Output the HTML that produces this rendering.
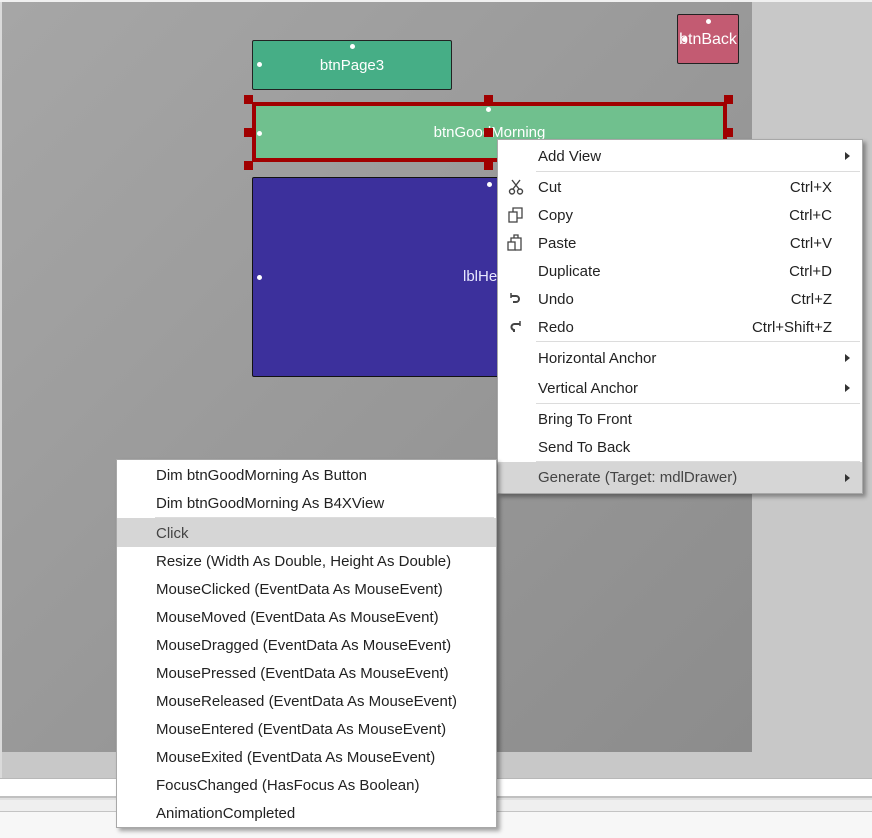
<!DOCTYPE html>
<html><head><meta charset="utf-8"><style>
*{margin:0;padding:0;box-sizing:border-box}
body{width:872px;height:838px;overflow:hidden;background:#f7f7f7;position:relative;font-family:"Segoe UI","Liberation Sans",sans-serif;font-size:15px;color:#222}
.a{position:absolute}
.dot{position:absolute;width:5px;height:5px;border-radius:50%;background:#fff}
.h{position:absolute;width:9px;height:9px;background:#a00000}
.menu{position:absolute;background:#fff;border:1px solid #a8a8a8;box-shadow:3px 3px 4px rgba(0,0,0,.35)}
.it{position:absolute;left:0;right:0;height:28px;line-height:30px;white-space:nowrap}
.sel{background:#d6d6d6}
.sc{position:absolute;right:30px;top:0}
.ar{position:absolute;right:12px;top:10px;width:0;height:0;border-left:5px solid #333;border-top:4px solid transparent;border-bottom:4px solid transparent}
.sep{position:absolute;height:1px;background:#dcdcdc}
</style></head><body>
<div class="a" style="left:0;top:0;width:872px;height:2px;background:#f0f0f0"></div>
<div class="a" style="left:0;top:2px;width:2px;height:776px;background:#dadada"></div>
<div class="a" style="left:2px;top:2px;width:870px;height:776px;background:#c8c8c8"></div>
<div class="a" style="left:2px;top:2px;width:750px;height:750px;background:linear-gradient(135deg,#a6a6a6,#8c8c8c)"></div>
<div class="a" style="left:0;top:778px;width:872px;height:1px;background:#b8b8b8"></div>
<div class="a" style="left:0;top:779px;width:872px;height:17px;background:#fff"></div>
<div class="a" style="left:0;top:796px;width:872px;height:2px;background:#c0c0c0"></div>
<div class="a" style="left:0;top:798px;width:872px;height:2px;background:#e0e0e0"></div>
<div class="a" style="left:0;top:800px;width:872px;height:11px;background:#efefef"></div>
<div class="a" style="left:0;top:811px;width:872px;height:1px;background:#c4c4c4"></div>

<div class="a" style="left:252px;top:40px;width:200px;height:50px;background:#46ae86;border:1px solid #222;border-radius:2px;color:#fff;text-align:center;line-height:50px">btnPage3</div>
<div class="dot" style="left:350px;top:44px"></div><div class="dot" style="left:257px;top:62px"></div>
<div class="a" style="left:677px;top:14px;width:62px;height:50px;background:#c35b72;border:1px solid #222;border-radius:2px;color:#fff;text-align:center;line-height:50px;font-size:16px;overflow:hidden">btnBack</div>
<div class="dot" style="left:706px;top:19px"></div><div class="dot" style="left:682px;top:37px"></div>
<div class="a" style="left:252px;top:102px;width:475px;height:60px;background:#70c08e;border:4px solid #a00000;color:#fff;text-align:center;line-height:54px">btnGoodMorning</div>
<div class="h" style="left:244px;top:95px"></div><div class="h" style="left:484px;top:95px"></div><div class="h" style="left:724px;top:95px"></div>
<div class="h" style="left:244px;top:128px"></div><div class="h" style="left:484px;top:128px"></div><div class="h" style="left:724px;top:128px"></div>
<div class="h" style="left:244px;top:161px"></div><div class="h" style="left:484px;top:161px"></div>
<div class="dot" style="left:486px;top:107px"></div><div class="dot" style="left:257px;top:131px"></div>
<div class="a" style="left:252px;top:177px;width:475px;height:200px;background:#3c309c;border:1px solid #111;border-radius:2px"></div>
<div class="a" style="left:463px;top:268px;color:#e8e8ff">lblHello</div>
<div class="dot" style="left:487px;top:182px"></div><div class="dot" style="left:257px;top:275px"></div>

<div class="menu" style="left:497px;top:139px;width:366px;height:355px">
<div class="it" style="top:2px;padding-left:40px">Add View<span class="ar"></span></div>
<div class="sep" style="left:38px;right:2px;top:31px"></div>
<div class="it" style="top:33px;padding-left:40px">Cut<span class="sc">Ctrl+X</span>
<svg class="a" style="left:10px;top:6px" width="16" height="16" viewBox="0 0 16 16" fill="none" stroke="#444" stroke-width="1.4"><path d="M4 1l7 9M12 1L5 10"/><circle cx="4" cy="12.5" r="2.5"/><circle cx="12" cy="12.5" r="2.5"/></svg></div>
<div class="it" style="top:61px;padding-left:40px">Copy<span class="sc">Ctrl+C</span>
<svg class="a" style="left:10px;top:6px" width="16" height="16" viewBox="0 0 16 16" fill="none" stroke="#444" stroke-width="1.3"><rect x="1" y="5" width="8" height="10"/><path d="M5 5V1h9v10H9"/></svg></div>
<div class="it" style="top:89px;padding-left:40px">Paste<span class="sc">Ctrl+V</span>
<svg class="a" style="left:9px;top:5px" width="17" height="17" viewBox="0 0 17 17" fill="none" stroke="#444" stroke-width="1.3"><rect x="1" y="8" width="7" height="8"/><path d="M4 8V4h10v12H8M7 4V1h4v3"/></svg></div>
<div class="it" style="top:117px;padding-left:40px">Duplicate<span class="sc">Ctrl+D</span></div>
<div class="it" style="top:145px;padding-left:40px">Undo<span class="sc">Ctrl+Z</span>
<svg class="a" style="left:11px;top:8px" width="13" height="12" viewBox="0 0 13 12" fill="none" stroke="#444" stroke-width="2"><path d="M2 3h5a3 3 0 0 1 0 6H4"/><path d="M2 0v5" stroke-width="1.5"/></svg></div>
<div class="it" style="top:173px;padding-left:40px">Redo<span class="sc">Ctrl+Shift+Z</span>
<svg class="a" style="left:11px;top:8px" width="13" height="12" viewBox="0 0 13 12" fill="none" stroke="#444" stroke-width="2"><path d="M11 3H6a3 3 0 0 0-1 6v2"/><path d="M11 0v5" stroke-width="1.5"/></svg></div>
<div class="sep" style="left:38px;right:2px;top:201px"></div>
<div class="it" style="top:204px;padding-left:40px">Horizontal Anchor<span class="ar"></span></div>
<div class="it" style="top:234px;padding-left:40px">Vertical Anchor<span class="ar"></span></div>
<div class="sep" style="left:38px;right:2px;top:263px"></div>
<div class="it" style="top:265px;padding-left:40px">Bring To Front</div>
<div class="it" style="top:293px;padding-left:40px">Send To Back</div>
<div class="sep" style="left:38px;right:2px;top:321px"></div>
<div class="it sel" style="top:322px;height:31px;line-height:32px;padding-left:40px;color:#444">Generate (Target: mdlDrawer)<span class="ar" style="top:12px"></span></div>
</div>

<div class="menu" style="left:116px;top:459px;width:381px;height:369px">
<div class="it" style="top:1px;padding-left:39px">Dim btnGoodMorning As Button</div>
<div class="it" style="top:29px;padding-left:39px">Dim btnGoodMorning As B4XView</div>
<div class="sep" style="left:38px;right:2px;top:57px"></div>
<div class="it sel" style="top:58px;height:29px;line-height:31px;padding-left:39px;color:#444">Click</div>
<div class="it" style="top:87px;padding-left:39px">Resize (Width As Double, Height As Double)</div>
<div class="it" style="top:115px;padding-left:39px">MouseClicked (EventData As MouseEvent)</div>
<div class="it" style="top:143px;padding-left:39px">MouseMoved (EventData As MouseEvent)</div>
<div class="it" style="top:171px;padding-left:39px">MouseDragged (EventData As MouseEvent)</div>
<div class="it" style="top:199px;padding-left:39px">MousePressed (EventData As MouseEvent)</div>
<div class="it" style="top:227px;padding-left:39px">MouseReleased (EventData As MouseEvent)</div>
<div class="it" style="top:255px;padding-left:39px">MouseEntered (EventData As MouseEvent)</div>
<div class="it" style="top:283px;padding-left:39px">MouseExited (EventData As MouseEvent)</div>
<div class="it" style="top:311px;padding-left:39px">FocusChanged (HasFocus As Boolean)</div>
<div class="it" style="top:339px;padding-left:39px">AnimationCompleted</div>
</div>
</body></html>
